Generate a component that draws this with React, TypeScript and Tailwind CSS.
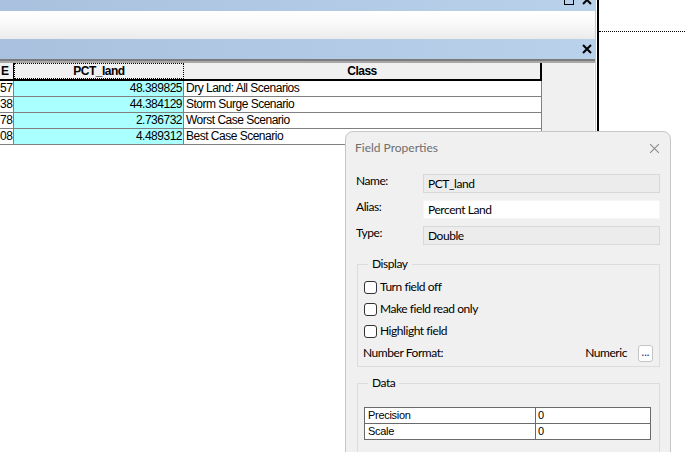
import React from 'react';

const rows = [
  { id: '57', pct: '48.389825', cls: 'Dry Land: All Scenarios' },
  { id: '38', pct: '44.384129', cls: 'Storm Surge Scenario' },
  { id: '78', pct: '2.736732', cls: 'Worst Case Scenario' },
  { id: '08', pct: '4.489312', cls: 'Best Case Scenario' },
];

const XIcon: React.FC<{ size: number; className?: string; width?: number }> = ({ size, className, width = 2 }) => (
  <svg width={size} height={size} viewBox="0 0 10 10" className={className} fill="none" stroke="currentColor" strokeWidth={width}>
    <path d="M1 1L9 9M9 1L1 9" />
  </svg>
);

const Checkbox: React.FC<{ label: string }> = ({ label }) => (
  <div className="h-[22px] flex items-center gap-[3px]">
    <span className="w-[13px] h-[13px] rounded-[3px] border border-[#333] bg-white" />
    <span>{label}</span>
  </div>
);

const FieldRow: React.FC<{ label: string; value: string; editable?: boolean }> = ({ label, value, editable }) => (
  <div className="flex items-start">
    <div className="w-[67px] leading-[16px] -mt-[1px]">{label}</div>
    <div
      className={`w-[237px] h-[19px] flex items-center px-[4px] border ${
        editable ? 'bg-white border-[#f5f5f5]' : 'bg-[#ececec] border-[#d8d8d8]'
      }`}
    >
      {value}
    </div>
  </div>
);

const App: React.FC = () => {
  const blue = 'bg-gradient-to-r from-[#a9c1de] to-[#b9d1ea]';

  return (
    <div className="w-[685px] h-[452px] bg-white relative overflow-hidden flex font-['Liberation_Sans',Arial,sans-serif]">
      {/* table window */}
      <div className="w-[595px] flex flex-col">
        <div className={`h-[11px] ${blue} flex justify-end items-start gap-[8px] pr-[3px] overflow-hidden`}>
          <svg width="10" height="10" viewBox="0 0 10 10" className="-mt-[5px]" fill="none" stroke="#000" strokeWidth="1">
            <rect x="0.5" y="0.5" width="9" height="9" />
          </svg>
          <XIcon size={10} className="-mt-[5px] text-black" />
        </div>
        <div className="h-[28px] bg-gradient-to-b from-white via-[#f8f8f8] to-[#ebebeb]" />
        <div className={`h-[20px] ${blue} flex items-center justify-end pr-[3px]`}>
          <XIcon size={10} className="text-black" />
        </div>
        <div className="h-[2px] bg-[#7c7c7c]" />
        <div className="h-[2px] bg-[#a8a8a8]" />

        <div className="flex flex-1">
          <div className="w-[542px] text-[12px] tracking-[-0.5px] text-black">
            <div className="flex h-[18px] bg-[#f0f0f0] border-b-2 border-black font-bold">
              <div className="w-[14px] border-r border-black overflow-hidden leading-[16px] pl-[1px]">E</div>
              <div className="w-[170px] border border-dotted border-black text-center leading-[14px]">PCT_land</div>
              <div className="flex-1 border-r-2 border-black text-center leading-[16px]">Class</div>
            </div>
            {rows.map((r) => (
              <div key={r.id} className="flex h-[16px] border-b border-[#808080] leading-[15px]">
                <div className="w-[14px] border-r border-[#808080] text-right pr-[1px] overflow-hidden">{r.id}</div>
                <div className="w-[170px] bg-[#aaffff] border-r border-[#808080] text-right pr-[1px]">{r.pct}</div>
                <div className="flex-1 border-r border-[#808080] pl-[2px]">{r.cls}</div>
              </div>
            ))}
          </div>
          <div className="flex-1 bg-[#f0f0f0] border-r border-white" />
        </div>
      </div>
      <div className="w-[1px] bg-[#c8c8c8]" />
      <div className="w-[1px] bg-white" />
      <div className="w-[2px] bg-black" />

      {/* right pane */}
      <div className="flex-1 pt-[31px]">
        <div className="border-t border-dotted border-black" />
      </div>

      {/* Field Properties dialog */}
      <div className="absolute left-[345px] top-[131px] w-[326px] h-[340px] bg-[#f0f0f0] border border-[#c6c6c6] rounded-t-[8px] text-[12px] text-black font-['Lato',sans-serif]">
        <div className="h-[32px] flex items-center justify-between pl-[9px] pr-[10px]">
          <span className="text-[#6e6e6e]">Field Properties</span>
          <XIcon size={11} width={1} className="text-[#8a8a8a]" />
        </div>
        <div className="tracking-[-0.45px]">
          <div className="mt-[10px] pl-[10px] flex flex-col gap-[7px]">
            <FieldRow label="Name:" value="PCT_land" />
            <FieldRow label="Alias:" value="Percent Land" editable />
            <FieldRow label="Type:" value="Double" />
          </div>

          <fieldset className="mt-[11px] ml-[11px] w-[303px] border border-[#dcdcdc] px-[6px] pb-[2px]">
            <legend className="ml-[4px] px-[4px] leading-[16px]">Display</legend>
            <div className="pt-[4px]">
              <Checkbox label="Turn field off" />
              <Checkbox label="Make field read only" />
              <Checkbox label="Highlight field" />
              <div className="h-[22px] flex items-center">
                <span className="flex-1 -ml-[1px]">Number Format:</span>
                <span>Numeric</span>
                <span className="ml-[11px] w-[15px] h-[17px] bg-white border border-[#c4c4c4] rounded-[3px] flex items-center justify-center text-[11px] leading-none text-[#1a1a6e] pb-[3px] tracking-normal">
                  ...
                </span>
              </div>
            </div>
          </fieldset>

          <fieldset className="mt-[8px] ml-[11px] w-[303px] h-[90px] border border-[#dcdcdc] px-[6px]">
            <legend className="ml-[4px] px-[4px] leading-[16px]">Data</legend>
            <div className="mt-[16px] w-[287px] border border-[#6a6a6a] bg-white font-['Liberation_Sans',Arial,sans-serif] text-[11px] tracking-[-0.3px]">
              <div className="flex h-[16px] border-b border-[#6a6a6a] leading-[15px]">
                <div className="w-[171px] border-r border-[#6a6a6a] pl-[3px]">Precision</div>
                <div className="flex-1 pl-[2px]">0</div>
              </div>
              <div className="flex h-[15px] leading-[15px]">
                <div className="w-[171px] border-r border-[#6a6a6a] pl-[3px]">Scale</div>
                <div className="flex-1 pl-[2px]">0</div>
              </div>
            </div>
          </fieldset>
        </div>
      </div>
    </div>
  );
};

export default App;
